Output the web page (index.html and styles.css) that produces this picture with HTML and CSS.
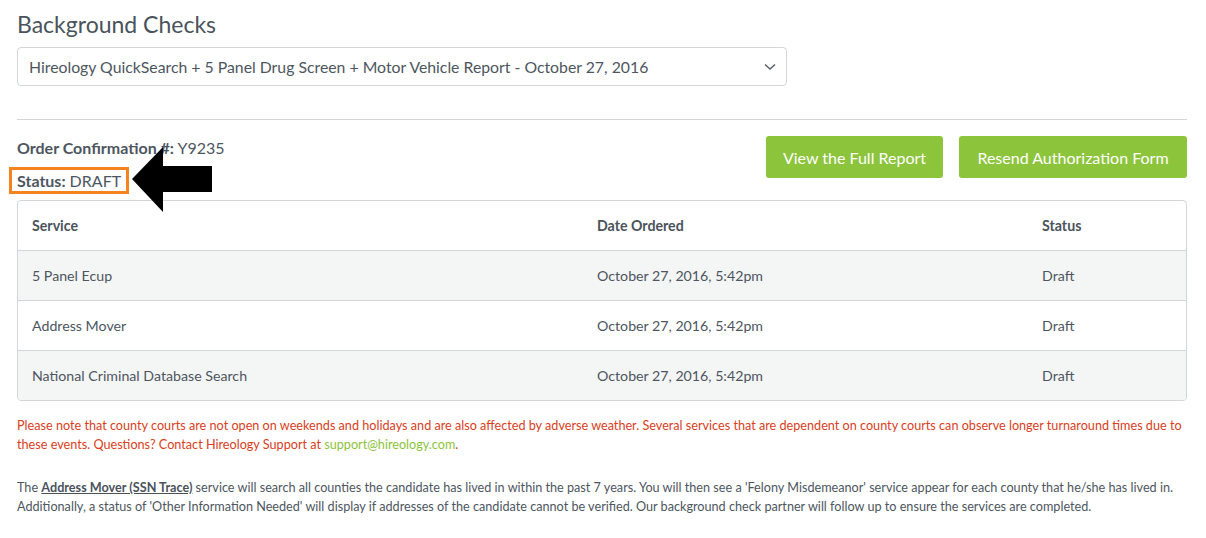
FILE: index.html
```html
<!DOCTYPE html>
<html>
<head>
<meta charset="utf-8">
<link rel="stylesheet" href="styles.css">
</head>
<body>
<div class="page">
  <h1 class="title">Background Checks</h1>
  <div class="select">
    <span class="select-text">Hireology QuickSearch + 5 Panel Drug Screen + Motor Vehicle Report - October 27, 2016</span>
    <svg class="chev" width="12" height="8" viewBox="0 0 12 8"><path d="M1 1.5 L6 6 L11 1.5" fill="none" stroke="#5a636b" stroke-width="1.6"/></svg>
  </div>
  <div class="rule"></div>
  <div class="order-row">
    <div class="order-info">
      <div class="order-line"><b>Order Confirmation #:</b> Y9235</div>
      <div class="status-wrap">
        <div class="status-box"><b>Status:</b> DRAFT</div>
      </div>
      <svg class="arrow" width="82" height="66" viewBox="0 0 82 66"><polygon points="0,32 31,0 31,19 80,19 80,45 31,45 31,65" fill="#000"/></svg>
    </div>
    <div class="buttons">
      <button class="btn btn-view">View the Full Report</button>
      <button class="btn btn-resend">Resend Authorization Form</button>
    </div>
  </div>
  <div class="table">
    <div class="tr th">
      <div class="c1">Service</div><div class="c2">Date Ordered</div><div class="c3">Status</div>
    </div>
    <div class="tr alt">
      <div class="c1">5 Panel Ecup</div><div class="c2">October 27, 2016, 5:42pm</div><div class="c3">Draft</div>
    </div>
    <div class="tr">
      <div class="c1">Address Mover</div><div class="c2">October 27, 2016, 5:42pm</div><div class="c3">Draft</div>
    </div>
    <div class="tr alt last">
      <div class="c1">National Criminal Database Search</div><div class="c2">October 27, 2016, 5:42pm</div><div class="c3">Draft</div>
    </div>
  </div>
  <p class="warn">Please note that county courts are not open on weekends and holidays and are also affected by adverse weather. Several services that are dependent on county courts can observe longer turnaround times due to these events. Questions? Contact Hireology Support at <a class="mail" href="#">support@hireology.com</a>.</p>
  <p class="note">The <a class="ul" href="#">Address Mover (SSN Trace)</a> service will search all counties the candidate has lived in within the past 7 years. You will then see a 'Felony Misdemeanor' service appear for each county that he/she has lived in. Additionally, a status of 'Other Information Needed' will display if addresses of the candidate cannot be verified. Our background check partner will follow up to ensure the services are completed.</p>
</div>
</body>
</html>
```
FILE: styles.css
```css
html, body {
  margin: 0;
  padding: 0;
  background: #fff;
}
body {
  font-family: Lato, "Open Sans", sans-serif;
  color: #4d5660;
}
.page {
  width: 1170px;
  padding: 0 19px 0 17px;
}
.title {
  margin: 0;
  padding-top: 9px;
  font-size: 23px;
  line-height: 30px;
  font-weight: 400;
  color: #4a535c;
}
.select {
  margin-top: 8px;
  width: 770px;
  height: 39px;
  box-sizing: border-box;
  border: 1px solid #d3d6d8;
  border-radius: 4px;
  display: flex;
  align-items: center;
  justify-content: space-between;
  padding: 0 10px 0 11px;
  font-size: 15.8px;
  color: #4d5660;
}
.rule {
  margin-top: 33px;
  height: 1px;
  background: #d3d6d8;
}
.order-row {
  display: flex;
  justify-content: space-between;
  align-items: flex-start;
  margin-top: 16px;
}
.order-info {
  position: relative;
  font-size: 16px;
}
.order-line {
  margin-top: 2px;
  line-height: 20px;
}
.order-line b, .status-box b {
  font-weight: 700;
}
.status-wrap {
  margin-top: 9px;
  margin-left: -8px;
  display: flex;
}
.status-box {
  border: 3px solid #f5841f;
  padding: 0 5px;
  line-height: 21px;
}
.arrow {
  position: absolute;
  left: 115px;
  top: 11px;
}
.buttons {
  display: flex;
  gap: 16px;
}
.btn {
  height: 42px;
  border: none;
  border-radius: 3px;
  background: #8cc43c;
  color: #fff;
  font-family: Lato, "Open Sans", sans-serif;
  font-size: 16px;
  padding: 0;
  cursor: pointer;
}
.btn-view { width: 177px; }
.btn-resend { width: 228px; }
.table {
  margin-top: 6px;
  border: 1px solid #d3d6d8;
  border-radius: 4px;
  overflow: hidden;
  font-size: 14.2px;
}
.tr {
  display: flex;
  height: 49px;
  align-items: center;
  border-top: 1px solid #d3d6d8;
}
.tr.th {
  border-top: none;
  font-weight: 700;
  color: #4a535c;
}
.tr.alt {
  background: #f4f5f5;
}
.c1 { width: 579px; padding-left: 14px; box-sizing: border-box; }
.c2 { width: 445px; }
.c3 { flex: 1; }
.warn {
  margin: 15px -15px 0 0;
  font-size: 12.65px;
  line-height: 19px;
  color: #d9401b;
}
.mail {
  color: #8cc43c;
  text-decoration: none;
}
.note {
  margin: 24px -15px 0 0;
  font-size: 12.65px;
  line-height: 19px;
  color: #4d5660;
}
.ul {
  color: #4a535c;
  font-weight: 700;
  text-decoration: underline;
}
```
